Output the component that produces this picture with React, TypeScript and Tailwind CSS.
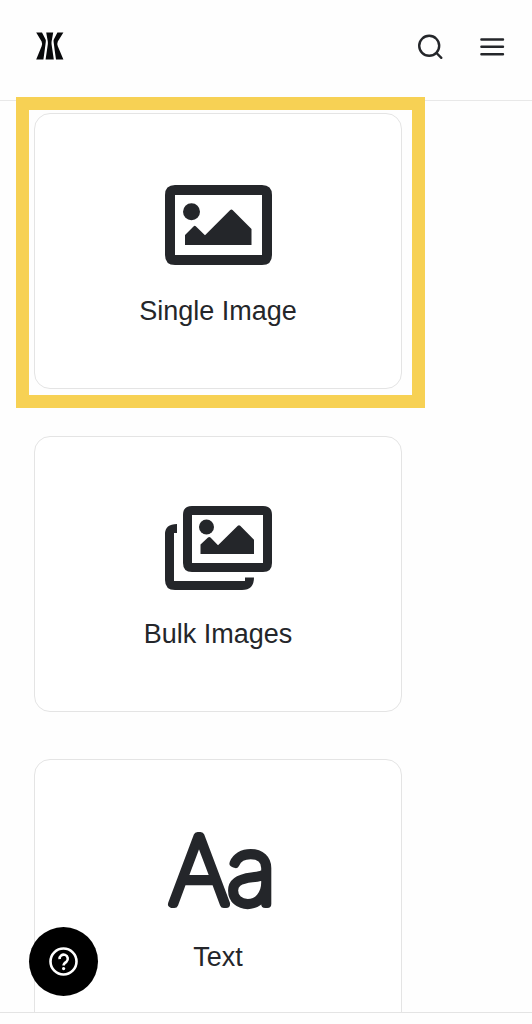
import type { ReactNode } from "react";

function Logo() {
  return (
    <svg viewBox="0 0 28 28" className="h-7 w-7" fill="#08090b" aria-hidden="true">
      <path d="M0.2 0.4H6L9.6 7.6Q10 8.6 9.8 9.8Q8.8 18 7.4 27.6H0.2L5.6 14.2Q6.6 11.6 5.6 9.4Z" />
      <path d="M10.2 0.4H17.2L15.6 9.6Q15.4 11 15.6 12.6L17.8 27.6H9.6L11.8 12.6Q12 11 11.8 9.6Z" />
      <path d="M27.4 0.4H21.4L17.8 7.6Q17.4 8.6 17.6 9.8Q18.6 18 20 27.6H27.4L21.8 14.2Q20.8 11.6 21.8 9.4Z" />
    </svg>
  );
}

function SingleImageIcon() {
  return (
    <svg viewBox="0 0 107 80" className="h-20 w-[107px]" fill="#24262a" aria-hidden="true">
      <path
        fillRule="evenodd"
        d="M10 0H97Q107 0 107 10V70Q107 80 97 80H10Q0 80 0 70V10Q0 0 10 0ZM10 10V70H97V10Z"
      />
      <circle cx="26.5" cy="26.7" r="8.5" />
      <path d="M20 60V50L28.5 41.5Q29.8 40.2 31 41.5L40 50.3L65 25.2Q66.4 23.8 67.8 25.2L86.5 44V60Z" />
    </svg>
  );
}

function BulkImagesIcon() {
  return (
    <svg viewBox="0 0 107 84" className="h-[84px] w-[107px]" fill="#24262a" aria-hidden="true">
      <path
        fillRule="evenodd"
        d="M27 0H98Q107 0 107 9V57Q107 66 98 66H27Q18 66 18 57V9Q18 0 27 0ZM27 9V57H98V9Z"
      />
      <circle cx="41.5" cy="21" r="7.5" />
      <path d="M35.5 48V38.5L43 31.5Q44.3 30.3 45.5 31.5L53 39.3L72.8 19.8Q74 18.6 75.2 19.8L89 33.7V48Z" />
      <path d="M12 18V27H9V75H80V71.5H89Q89 84 77 84H10Q0 84 0 74V28Q0 18 12 18Z" />
    </svg>
  );
}

function TextIcon() {
  return (
    <svg viewBox="0 0 107 84" className="h-[84px] w-[107px] overflow-visible" aria-hidden="true">
      <text
        x="4 62"
        y="75"
        fill="#24262a"
        stroke="#24262a"
        strokeWidth="8"
        strokeLinejoin="round"
        className="font-['Inter',sans-serif] text-[94px] font-thin"
      >
        Aa
      </text>
    </svg>
  );
}

type OptionCardProps = {
  label: string;
  icon: ReactNode;
  selected?: boolean;
};

function OptionCard({ label, icon, selected = false }: OptionCardProps) {
  return (
    <button
      type="button"
      aria-pressed={selected}
      className="relative flex w-full flex-col items-center rounded-2xl border border-[#e4e4e4] bg-white px-6 pt-[67px] pb-[59px]"
    >
      <span className="flex h-[88px] items-center justify-center">{icon}</span>
      <span className="mt-6 text-[27px] leading-9">{label}</span>
      {selected && (
        <span className="pointer-events-none absolute -top-[17px] -right-6 -bottom-5 -left-[19px] border-[13px] border-[#f7d154]" />
      )}
    </button>
  );
}

export default function App() {
  return (
    <div className="relative flex h-screen flex-col bg-[#fefefe] pb-[11px] font-['Liberation_Sans',sans-serif] text-[#24262a]">
      <div className="flex-1 overflow-y-auto border-b border-[#e4e4e4] [scrollbar-width:none]">
        <header className="flex items-center justify-between border-b border-[#e8e8e8] pt-8 pr-[26px] pb-10 pl-9">
          <a href="#" aria-label="Home">
            <Logo />
          </a>
          <div className="flex items-center gap-8">
            <button type="button" aria-label="Search">
              <svg viewBox="0 0 28 28" className="h-7 w-7" fill="none" stroke="#24262a" strokeWidth="2.4" strokeLinecap="round" aria-hidden="true">
                <circle cx="11.2" cy="13.8" r="10" />
                <path d="M18.5 21L23.3 25.8" />
              </svg>
            </button>
            <button type="button" aria-label="Menu">
              <svg viewBox="0 0 28 28" className="h-7 w-7" fill="none" stroke="#24262a" strokeWidth="2.4" strokeLinecap="round" aria-hidden="true">
                <path d="M3.4 7.5H25M3.4 14.8H25M3.4 22.2H25" />
              </svg>
            </button>
          </div>
        </header>

        <main className="flex flex-col gap-[47px] pt-3 pr-[130px] pb-12 pl-[34px]">
          <OptionCard label="Single Image" icon={<SingleImageIcon />} selected />
          <OptionCard label="Bulk Images" icon={<BulkImagesIcon />} />
          <OptionCard label="Text" icon={<TextIcon />} />
        </main>
      </div>

      {/* Help bubble */}
      <button
        type="button"
        aria-label="Help"
        className="absolute bottom-7 left-[29px] flex h-[69px] w-[69px] items-center justify-center rounded-full bg-black"
      >
        <svg viewBox="0 0 30 30" className="h-[30px] w-[30px]" fill="none" stroke="white" strokeWidth="2.6" aria-hidden="true">
          <circle cx="14.5" cy="14.5" r="13" />
          <path d="M10.6 12.2A4.1 4.1 0 1 1 17.4 14.8C15.6 15.9 14.6 16.6 14.6 18.6" />
          <circle cx="14.6" cy="21.6" r="1.6" fill="white" stroke="none" />
        </svg>
      </button>
    </div>
  );
}
